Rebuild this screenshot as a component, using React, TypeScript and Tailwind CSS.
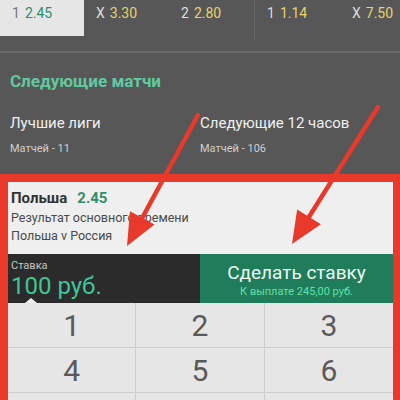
import React from 'react';

type Odd = { label: string; value: string; width: string };

const odds: Odd[] = [
  { label: '1', value: '2.45', width: 'w-[84px]' },
  { label: 'X', value: '3.30', width: 'w-[85px]' },
  { label: '2', value: '2.80', width: 'w-[85px]' },
  { label: '1', value: '1.14', width: 'w-[85px]' },
  { label: 'X', value: '7.50', width: 'flex-1' },
];

const keys = ['1', '2', '3', '4', '5', '6', '7', '8', '9'];

function Arrow({ from, to }: { from: [number, number]; to: [number, number] }) {
  const dx = to[0] - from[0];
  const dy = to[1] - from[1];
  const len = Math.hypot(dx, dy);
  const ux = dx / len;
  const uy = dy / len;
  const head = 32;
  const half = 14;
  const bx = to[0] - ux * head;
  const by = to[1] - uy * head;
  const px = -uy * half;
  const py = ux * half;
  return (
    <g>
      <line x1={from[0]} y1={from[1]} x2={bx + ux * 4} y2={by + uy * 4} stroke="#e8392b" strokeWidth={4.5} strokeLinecap="round" />
      <polygon points={`${to[0]},${to[1]} ${bx + px},${by + py} ${bx - px},${by - py}`} fill="#e8392b" />
    </g>
  );
}

export default function App() {
  return (
    <div className="relative w-[400px] h-[400px] overflow-hidden bg-[#575757] font-['Roboto',sans-serif]">
      {/* odds strip */}
      <div className="flex h-[51px] items-start">
        {odds.map((o, i) => (
          <React.Fragment key={i}>
            {i === 3 && <div className="w-px h-[40px] bg-[#666]" />}
            <div
              className={`${o.width} h-[36px] pl-[12px] pt-[5px] text-[14px] leading-[16px] flex gap-[5px] ${
                i === 0 ? 'bg-[#e6e6e6]' : ''
              }`}
            >
              <span className={i === 0 ? 'text-[#777]' : 'text-[#ddd]'}>{o.label}</span>
              <span className={i === 0 ? 'text-[#2f8f6c]' : 'text-[#e6d36a]'}>{o.value}</span>
            </div>
          </React.Fragment>
        ))}
      </div>
      <div className="h-[2px] bg-[#6c6c6c]" />

      {/* next matches */}
      <div className="px-[10px] pt-[18px] h-[121px]">
        <div className="text-[17px] leading-[20px] font-bold text-[#62c8a0]">Следующие матчи</div>
        <div className="flex mt-[22px]">
          <div className="w-[190px]">
            <div className="text-[15px] leading-[20px] text-[#f0f0f0]">Лучшие лиги</div>
            <div className="text-[11px] leading-[14px] text-[#cfcfcf] mt-[9px]">Матчей - 11</div>
          </div>
          <div>
            <div className="text-[15px] leading-[20px] text-[#f0f0f0]">Следующие 12 часов</div>
            <div className="text-[11px] leading-[14px] text-[#cfcfcf] mt-[9px]">Матчей - 106</div>
          </div>
        </div>
      </div>

      {/* bet slip */}
      <div className="border-t-[8px] border-l-[8px] border-r-[7px] border-[#e8392b] bg-[#efefef]">
        <div className="px-[3px] pt-[6px] h-[72px]">
          <div className="flex gap-[10px] text-[15px] leading-[20px] font-bold">
            <span className="text-[#333]">Польша</span>
            <span className="text-[#2f8f6c]">2.45</span>
          </div>
          <div className="text-[12.5px] leading-[18px] text-[#4a4a4a] mt-[1px]">Результат основного времени</div>
          <div className="text-[12.5px] leading-[18px] text-[#4a4a4a]">Польша v Россия</div>
        </div>
        <div className="flex h-[49px]">
          <div className="relative w-[192px] bg-[#2b2b2b] pl-[3px] pt-[6px]">
            <div className="text-[11px] leading-[12px] text-[#c4c4c4]">Ставка</div>
            <div className="text-[24px] leading-[28px] text-[#3fc697]">100 руб.</div>
            <div className="absolute left-[17px] bottom-0 w-0 h-0 border-x-[6px] border-x-transparent border-b-[5px] border-b-[#efefef]" />
          </div>
          <div className="flex-1 bg-[#1f7d5b] flex flex-col items-center pt-[7px]">
            <div className="text-[19px] leading-[24px] text-[#eef7f2]">Сделать ставку</div>
            <div className="text-[11px] leading-[14px] text-[#62e0a9]">К выплате 245,00 руб.</div>
          </div>
        </div>
        <div className="grid grid-cols-3 bg-[#e6e6e6]">
          {keys.map((k, i) => (
            <div
              key={k}
              className={`h-[45px] flex items-center justify-center text-[30px] text-[#5a5a5a] border-b border-[#cdcdcd] ${
                i % 3 !== 2 ? 'border-r' : ''
              }`}
            >
              {k}
            </div>
          ))}
        </div>
      </div>

      <svg className="absolute inset-0 pointer-events-none" width={400} height={400}>
        <Arrow from={[198, 115]} to={[127, 246]} />
        <Arrow from={[378, 107]} to={[292, 244]} />
      </svg>
    </div>
  );
}
